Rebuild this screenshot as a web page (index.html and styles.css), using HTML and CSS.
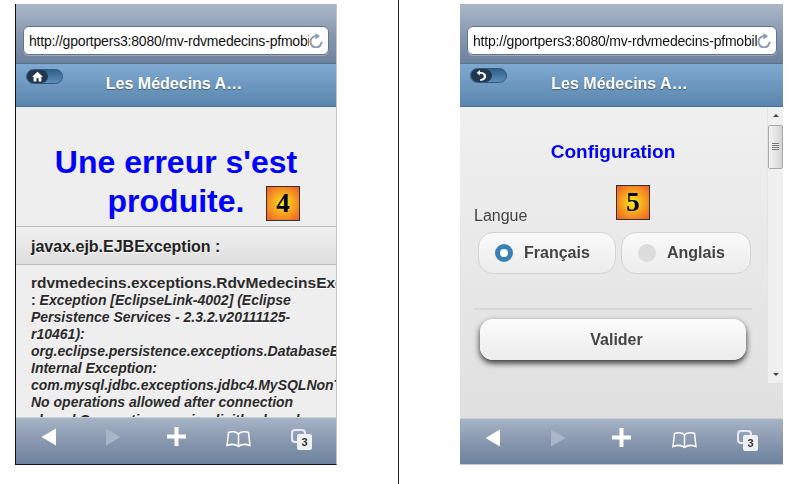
FILE: index.html
```html
<!DOCTYPE html>
<html lang="fr">
<head>
    <meta charset="UTF-8">
    <title>Les Médecins Associés</title>
    <link rel="stylesheet" href="styles.css">
</head>
<body>
    <div class="phone phone-left">
        <div class="address-bar">
            <div class="url-field">
                <span class="url-text">http://gportpers3:8080/mv-rdvmedecins-pfmobile</span>
                <svg class="reload" viewBox="0 0 14 15"><path d="M12.600 8.800A5.600 5.600 0 1 1 7 3.200" fill="none" stroke="#8a9bb0" stroke-width="2"/><path d="M6.500 0v6.500L11 3.200z" fill="#8a9bb0"/></svg>
            </div>
        </div>
        <div class="nav-bar">
            <span class="nav-btn">
                <span class="nav-icon">
                    <svg viewBox="0 0 12 12"><path d="M6 1.500 11 6.300H9.600V10.500H7V7.600H5V10.500H2.400V6.300H1z" fill="#fff"/></svg>
                </span>
            </span>
            <span class="nav-title">Les Médecins A…</span>
        </div>
        <div class="content error-content">
            <h1 class="error-title">Une erreur s'est produite.</h1>
            <div class="step-badge badge-four">4</div>
            <div class="error-head">javax.ejb.EJBException :</div>
            <div class="error-body">
                <b class="nowrap">rdvmedecins.exceptions.RdvMedecinsException</b><br>
                : <i>Exception [EclipseLink-4002] (Eclipse Persistence Services - 2.3.2.v20111125-r10461):</i><br>
                <i class="nowrap">org.eclipse.persistence.exceptions.DatabaseException</i><br>
                <i>Internal Exception:</i><br>
                <i class="nowrap">com.mysql.jdbc.exceptions.jdbc4.MySQLNonTransientConnectionException:</i><br>
                <i>No operations allowed after connection</i>
                <i class="clipped-line">closed.Connection was implicitly closed</i>
            </div>
        </div>
        <div class="toolbar">
            <svg class="tool tool-back" viewBox="0 0 16 18"><path d="M15 0.500V17.500L0.500 9z" fill="#fff"/></svg>
            <svg class="tool tool-next" viewBox="0 0 16 18"><path d="M1 0.500V17.500L15.500 9z" fill="#a9b6c8"/></svg>
            <svg class="tool tool-plus" viewBox="0 0 19 19"><path d="M7.500 0h4v7.500H19v4h-7.500V19h-4v-7.500H0v-4h7.500z" fill="#fff"/></svg>
            <svg class="tool tool-book" viewBox="0 0 25 18"><path d="M12.500 4C10.500 1.500 5 1 2.500 2.500L1 15.500c4-1.500 8.500-1.500 11.500 1 3-2.500 7.500-2.500 11.500-1L22.500 2.500C20 1 14.500 1.500 12.500 4zM12.500 4V16" fill="none" stroke="#fff" stroke-width="1.500"/></svg>
            <span class="tool tool-tabs"><span class="tabs-back"></span><span class="tabs-count">3</span></span>
        </div>
    </div>

    <div class="divider"></div>

    <div class="phone phone-right">
        <div class="address-bar">
            <div class="url-field">
                <span class="url-text">http://gportpers3:8080/mv-rdvmedecins-pfmobile</span>
                <svg class="reload" viewBox="0 0 14 15"><path d="M12.600 8.800A5.600 5.600 0 1 1 7 3.200" fill="none" stroke="#8a9bb0" stroke-width="2"/><path d="M6.500 0v6.500L11 3.200z" fill="#8a9bb0"/></svg>
            </div>
        </div>
        <div class="nav-bar">
            <span class="nav-btn">
                <span class="nav-icon">
                    <svg viewBox="0 0 12 12"><path d="M4.500 1 1.500 3.500 4.500 6V4.500C7 4.300 8.200 5.300 8.200 6.800 8.200 8.300 7 9.300 4.800 9.500V11C8 11 10.300 9.400 10.300 6.700 10.300 4.200 8 2.600 4.500 2.700z" fill="#fff"/></svg>
                </span>
            </span>
            <span class="nav-title">Les Médecins A…</span>
        </div>
        <div class="content config-content">
            <div class="config-main">
                <h2 class="config-title">Configuration</h2>
                <div class="step-badge badge-five">5</div>
                <div class="lang-label">Langue</div>
                <div class="radio-row">
                    <div class="radio-btn radio-fr"><span class="radio-dot on"></span>Français</div>
                    <div class="radio-btn radio-en"><span class="radio-dot"></span>Anglais</div>
                </div>
                <div class="rule"></div>
                <div class="submit-btn">Valider</div>
            </div>
            <div class="scrollbar">
                <div class="arrow-up"></div>
                <div class="thumb"><span class="grip"></span></div>
                <div class="arrow-down"></div>
            </div>
        </div>
        <div class="toolbar">
            <svg class="tool tool-back" viewBox="0 0 16 18"><path d="M15 0.500V17.500L0.500 9z" fill="#fff"/></svg>
            <svg class="tool tool-next" viewBox="0 0 16 18"><path d="M1 0.500V17.500L15.500 9z" fill="#a9b6c8"/></svg>
            <svg class="tool tool-plus" viewBox="0 0 19 19"><path d="M7.500 0h4v7.500H19v4h-7.500V19h-4v-7.500H0v-4h7.500z" fill="#fff"/></svg>
            <svg class="tool tool-book" viewBox="0 0 25 18"><path d="M12.500 4C10.500 1.500 5 1 2.500 2.500L1 15.500c4-1.500 8.500-1.500 11.500 1 3-2.500 7.500-2.500 11.500-1L22.500 2.500C20 1 14.500 1.500 12.500 4zM12.500 4V16" fill="none" stroke="#fff" stroke-width="1.500"/></svg>
            <span class="tool tool-tabs"><span class="tabs-back"></span><span class="tabs-count">3</span></span>
        </div>
    </div>
</body>
</html>
```

FILE: styles.css
```css
html, body {
    margin: 0;
    height: 484px;
    overflow: hidden;
    background-color: white;
}
body {
    display: flex;
    align-items: flex-start;
    font-family: "Liberation Sans", Arial, sans-serif;
}
.phone {
    display: flex;
    flex-direction: column;
    margin-top: 4px;
    height: 461px;
    box-sizing: border-box;
}
.phone-left {
    width: 322px;
    margin-left: 15px;
    border-left: 1px solid #111;
    border-right: 1px solid #c4c4c4;
    border-bottom: 1px solid #111;
}
.phone-right {
    width: 323px;
    margin-left: 61px;
    border-bottom: 1px solid #c8c8c8;
    filter: blur(0.35px);
}
.divider {
    width: 1px;
    height: 484px;
    margin-left: 61px;
    background-color: #222;
}

/* safari chrome */
.address-bar {
    flex: none;
    height: 60px;
    box-sizing: border-box;
    padding: 22px 7px 0;
    background: linear-gradient(#abb7c8, #8696ae 55%, #6e829e);
    border-bottom: 1px solid #54708f;
}
.phone-right .address-bar {
    padding-right: 6px;
}
.url-field {
    display: flex;
    align-items: center;
    height: 29px;
    box-sizing: border-box;
    padding: 0 5px 0 5px;
    background-color: white;
    border: 1px solid #62748c;
    border-radius: 6px;
    box-shadow: 0 1px 0 rgba(255,255,255,0.3);
}
.url-text {
    flex: 1;
    min-width: 0;
    font-size: 14px;
    letter-spacing: -0.2px;
    color: #111;
    white-space: nowrap;
    overflow: hidden;
}
.reload {
    flex: none;
    width: 14px;
    height: 15px;
}
.nav-bar {
    flex: none;
    position: relative;
    height: 43px;
    background: linear-gradient(#80a9d1, #5a86ae);
    border-bottom: 1px solid #41709b;
    box-sizing: border-box;
    text-align: center;
}
.nav-title {
    display: block;
    padding: 10px 4px 0 0;
    font-size: 16px;
    font-weight: bold;
    line-height: 20px;
    color: white;
    text-shadow: 0 1px 1px rgba(0,0,0,0.4);
}
.nav-btn {
    position: absolute;
    left: 10px;
    top: 5px;
    width: 37px;
    height: 15px;
    box-sizing: border-box;
    border: 1px solid #2f5a80;
    border-radius: 8px;
    background: linear-gradient(#2f5f8a, #5e8cb8);
}
.phone-right .nav-btn {
    top: 4px;
}
.nav-icon {
    display: block;
    width: 21px;
    height: 13px;
    padding: 0 4px;
    box-sizing: border-box;
    border-radius: 7px;
    background-color: #22364d;
}
.nav-icon svg {
    display: block;
    width: 13px;
    height: 13px;
}

/* content */
.content {
    flex: 1;
    min-height: 0;
    position: relative;
    overflow: hidden;
}
.error-content {
    background-color: #eeeeee;
}
.error-title {
    margin: 0;
    padding: 36px 24px 5px 24px;
    font-size: 32px;
    line-height: 39px;
    font-weight: bold;
    text-align: center;
    color: #0000ff;
    border-bottom: 1px solid #bbb;
}
.error-head {
    padding: 11px 15px 9px;
    font-size: 16px;
    font-weight: bold;
    line-height: 17px;
    color: #222;
    background: linear-gradient(#f0f0f0, #dedede);
    border-bottom: 1px solid #bbb;
    text-shadow: 0 1px 0 #fff;
}
.error-body {
    padding: 9px 15px 0;
    width: 272px;
    font-size: 14px;
    font-weight: bold;
    line-height: 17px;
    color: #2a2a2a;
    text-shadow: 0 1px 0 #fff;
}
.error-body b {
    font-size: 15.5px;
}
.nowrap {
    white-space: nowrap;
}
.clipped-line {
    display: block;
    margin-top: 1px;
}
.step-badge {
    position: absolute;
    width: 34px;
    height: 35px;
    box-sizing: border-box;
    border: 1px solid #333;
    font-family: "Liberation Serif", serif;
    font-size: 27px;
    font-weight: bold;
    line-height: 33px;
    text-align: center;
    color: black;
    background: radial-gradient(circle, #f5e61c 5%, #f8a020 50%, #ee5a2a);
}
.badge-four {
    left: 250px;
    top: 79px;
}
.badge-five {
    left: 156px;
    top: 78px;
}
.config-content {
    display: flex;
    background: linear-gradient(#f0f0f0, #e0e0e0);
}
.config-main {
    width: 307px;
    box-sizing: border-box;
    padding: 0 15px 0 14px;
}
.config-title {
    margin: 0;
    padding-top: 33px;
    font-size: 19px;
    line-height: 24px;
    font-weight: bold;
    text-align: center;
    color: #0000ff;
}
.lang-label {
    margin-top: 42px;
    font-size: 16px;
    line-height: 20px;
    color: #444;
}
.radio-row {
    display: flex;
    gap: 5px;
    margin: 6px 0 0 4px;
}
.radio-btn {
    display: flex;
    align-items: center;
    height: 42px;
    box-sizing: border-box;
    padding-left: 16px;
    border: 1px solid #d4d4d4;
    border-radius: 15px;
    background: linear-gradient(#fafafa, #ececec);
    font-size: 16px;
    font-weight: bold;
    color: #444;
}
.radio-fr {
    width: 138px;
}
.radio-en {
    width: 130px;
}
.radio-dot {
    flex: none;
    box-sizing: border-box;
    width: 18px;
    height: 18px;
    margin-right: 11px;
    border-radius: 50%;
    background-color: #dcdcdc;
}
.radio-dot.on {
    background-color: white;
    border: 5px solid #3c7fb5;
}
.rule {
    margin-top: 34px;
    height: 2px;
    background-color: #d8d8d8;
}
.submit-btn {
    width: 266px;
    height: 41px;
    box-sizing: border-box;
    padding-left: 7px;
    margin: 9px 0 0 6px;
    border-radius: 13px;
    background: linear-gradient(#fcfcfc, #ececec);
    box-shadow: 0 3px 6px rgba(0,0,0,0.8);
    font-size: 16px;
    font-weight: bold;
    line-height: 41px;
    text-align: center;
    color: #444;
}
.scrollbar {
    position: relative;
    width: 16px;
    height: 276px;
    box-sizing: border-box;
    background-color: #f0f0f0;
    border-left: 1px solid #e4e4e4;
}
.arrow-up, .arrow-down {
    position: absolute;
    left: 5px;
    width: 0;
    height: 0;
    border-left: 3px solid transparent;
    border-right: 3px solid transparent;
}
.arrow-up {
    top: 7px;
    border-bottom: 3px solid #444;
}
.arrow-down {
    bottom: 7px;
    border-top: 3px solid #444;
}
.thumb {
    position: absolute;
    left: 0;
    top: 18px;
    width: 15px;
    height: 44px;
    box-sizing: border-box;
    border: 1px solid #a8a8a8;
    border-radius: 2px;
    background: linear-gradient(to right, #f4f4f4, #d4d4d4);
}
.grip {
    position: absolute;
    left: 3px;
    top: 17px;
    width: 7px;
    height: 7px;
    background: repeating-linear-gradient(#777 0 1px, #eee 1px 2px);
}

/* bottom toolbar */
.toolbar {
    flex: none;
    display: flex;
    align-items: flex-start;
    height: 47px;
    box-sizing: border-box;
    padding: 9px 0 0 25px;
    background: linear-gradient(#a7b4c6, #8b9ab1 45%, #6d819d);
    border-top: 1px solid #c9cfd8;
}
.phone-right .toolbar {
    height: 46px;
}
.tool {
    flex: none;
}
.tool-back {
    width: 16px;
    height: 18px;
    margin-top: 1px;
}
.tool-next {
    width: 16px;
    height: 18px;
    margin: 1px 0 0 48px;
}
.phone-right .tool-next {
    margin-left: 49px;
}
.tool-plus {
    width: 19px;
    height: 19px;
    margin-left: 46px;
}
.tool-book {
    width: 25px;
    height: 18px;
    margin: 3px 0 0 40px;
}
.phone-right .tool-book {
    margin-left: 41px;
}
.tool-tabs {
    position: relative;
    width: 21px;
    height: 21px;
    margin: 2px 0 0 40px;
}
.tabs-back {
    position: absolute;
    left: 0;
    top: 0;
    width: 15px;
    height: 14px;
    box-sizing: border-box;
    border: 2px solid #e8ecf2;
    border-radius: 4px;
}
.tabs-count {
    position: absolute;
    left: 6px;
    top: 5px;
    width: 15px;
    height: 16px;
    border-radius: 2px;
    background-color: #eef0f3;
    font-size: 11px;
    font-weight: bold;
    line-height: 16px;
    text-align: center;
    color: #333;
}
```
